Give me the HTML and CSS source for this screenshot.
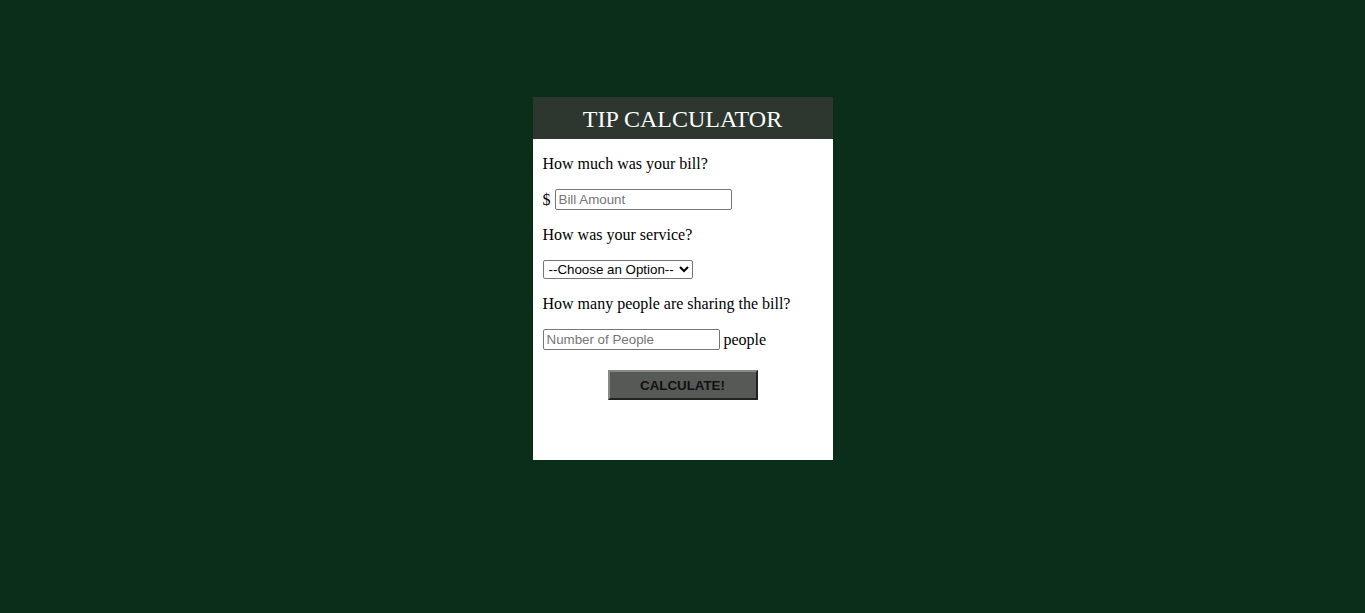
FILE: index.html
```html
<!DOCTYPE html>
<html>
<head>
<meta charset="utf-8">
<title>Tip Calculator</title>
<link rel="stylesheet" href="styles.css">
</head>
<body>
<div class="container">
  <h1 class="title">TIP CALCULATOR</h1>
  <div class="content">
    <p class="label">How much was your bill?</p>
    <p class="row">$ <input class="bill" type="text" placeholder="Bill Amount"></p>
    <p class="label">How was your service?</p>
    <p class="row"><select class="service"><option>--Choose an Option--</option></select></p>
    <p class="label">How many people are sharing the bill?</p>
    <p class="row"><input class="people" type="text" placeholder="Number of People"> people</p>
    <div class="actions"><button class="calc" type="button">CALCULATE!</button></div>
  </div>
</div>
</body>
</html>
```
FILE: styles.css
```css
html, body {
  margin: 0;
  padding: 0;
  background: #0b2e18;
}
body {
  font-family: "Liberation Serif", "Times New Roman", serif;
  font-size: 16px;
  padding-top: 97px;
}
.container {
  width: 300px;
  height: 363px;
  margin: 0 auto;
  background: #ffffff;
  box-sizing: border-box;
}
.title {
  margin: 0;
  height: 42px;
  line-height: 45px;
  background: #2e3630;
  color: #ffffff;
  font-weight: normal;
  font-size: 24px;
  text-align: center;
}
.content {
  padding: 0 10px;
}
.label {
  margin: 16px 0;
  line-height: 18px;
}
.row {
  margin: 16px 0;
  display: flex;
  align-items: center;
  gap: 4px;
}
input, select {
  font-family: "Liberation Sans", Arial, sans-serif;
  font-size: 13.33px;
  margin: 0;
}
.bill {
  width: 177px;
  height: 21px;
  box-sizing: border-box;
  border: 1px solid #767676;
  border-radius: 2px;
  padding: 1px 3px;
}
.people {
  width: 177px;
  height: 21px;
  box-sizing: border-box;
  border: 1px solid #767676;
  border-radius: 2px;
  padding: 1px 3px;
}
input::placeholder {
  color: #757575;
}
.service {
  width: 150px;
  height: 19px;
  box-sizing: border-box;
  border: 1px solid #767676;
  border-radius: 2px;
  background: #fff;
  color: #000;
  padding: 0 0 0 1px;
}
.actions {
  display: flex;
  justify-content: center;
  margin-top: 20px;
}
.calc {
  width: 150px;
  height: 30px;
  background: #565956;
  border: 2px solid;
  border-right-color: #222;
  border-bottom-color: #222;
  border-top-color: #888;
  border-left-color: #888;
  font-family: "Liberation Sans", Arial, sans-serif;
  font-weight: bold;
  font-size: 13.33px;
  color: #111;
  padding: 0;
}
```
